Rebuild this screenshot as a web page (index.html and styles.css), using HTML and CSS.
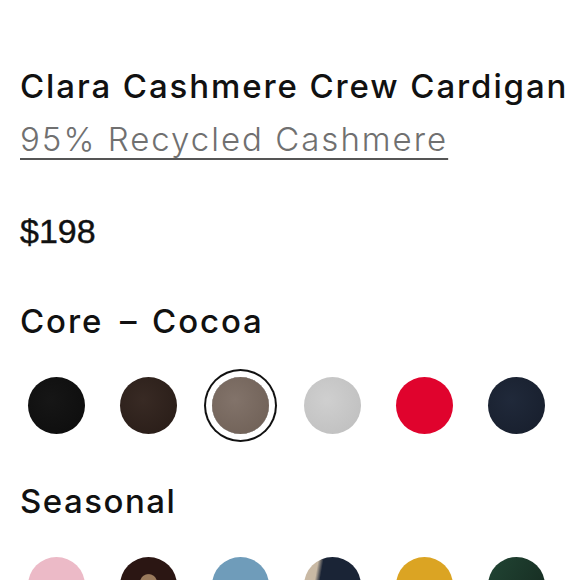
FILE: index.html
```html
<!DOCTYPE html>
<html lang="en">
<head>
    <meta charset="UTF-8">
    <meta name="viewport" content="width=device-width, initial-scale=1.0">
    <title>Clara Cashmere Crew Cardigan</title>
    <link rel="stylesheet" href="styles.css">
</head>
<body>
    <div class="product">
        <h1 class="product-name">Clara Cashmere Crew Cardigan</h1>
        <a class="product-material" href="#">95% Recycled Cashmere</a>
        <p class="product-price">$198</p>

        <h2 class="group-label">Core <span class="dash">–</span> Cocoa</h2>
        <div class="swatches">
            <span class="swatch black"></span>
            <span class="swatch brown"></span>
            <span class="swatch cocoa selected"></span>
            <span class="swatch heather"></span>
            <span class="swatch red"></span>
            <span class="swatch navy"></span>
        </div>

        <h2 class="group-label seasonal">Seasonal</h2>
        <div class="swatches">
            <span class="swatch pink"></span>
            <span class="swatch leopard"></span>
            <span class="swatch blue"></span>
            <span class="swatch colorblock"></span>
            <span class="swatch mustard"></span>
            <span class="swatch green"></span>
        </div>
    </div>
</body>
</html>
```

FILE: styles.css
```css
body {
    margin: 0;
    background-color: #fff;
    color: #111;
    font-family: Inter, "Liberation Sans", sans-serif;
    overflow: hidden;
}
.product {
    padding: 66px 0 0 20px;
}
.product-name {
    margin: 0;
    font-size: 33px;
    line-height: 40px;
    font-weight: 500;
    letter-spacing: 1.9px;
    white-space: nowrap;
}
.product-material {
    display: inline-block;
    margin-top: 13px;
    font-size: 33px;
    line-height: 40px;
    font-weight: 300;
    letter-spacing: 2px;
    color: #707070;
    text-decoration: underline;
    text-decoration-color: #555;
    text-decoration-thickness: 2px;
    text-underline-offset: 7px;
}
.product-price {
    margin: 52px 0 0;
    font-family: "Liberation Sans", Arial, sans-serif;
    font-size: 34px;
    line-height: 40px;
    -webkit-text-stroke: 0.4px #111;
}
.group-label {
    margin: 50px 0 0;
    font-size: 33px;
    line-height: 40px;
    font-weight: 500;
    letter-spacing: 1.9px;
}
.group-label.seasonal {
    margin-top: 47px;
    letter-spacing: 1.5px;
}
.dash {
    margin: 0 3px 0 6px;
}
.swatches {
    display: flex;
    gap: 35px;
    margin: 36px 0 0 8px;
}
.swatch {
    width: 57px;
    height: 57px;
    border-radius: 50%;
    flex-shrink: 0;
}
.swatch.selected {
    box-shadow: 0 0 0 6px #fff, 0 0 0 8px #111;
}
.black { background: radial-gradient(circle at 40% 40%, #161616, #0c0c0c); }
.brown { background: radial-gradient(circle at 40% 40%, #382a24, #271b16); }
.cocoa { background: radial-gradient(circle at 40% 40%, #82736a, #6d5e54); }
.heather { background: radial-gradient(circle at 40% 40%, #cfcfcf, #bdbdbd); }
.red { background: #e0032d; }
.navy { background: radial-gradient(circle at 40% 40%, #20293a, #161d2b); }
.pink { background: #ecbac7; }
.leopard { background: radial-gradient(circle at 50% 45%, #9a7a5c 0 8px, #2b1613 9px); }
.blue { background: #6f9cba; }
.colorblock { background: linear-gradient(100deg, #c9b9a4 0 22%, #1a2436 30%); }
.mustard { background: #dba423; }
.green { background: linear-gradient(120deg, #214534, #15291f); }
```
